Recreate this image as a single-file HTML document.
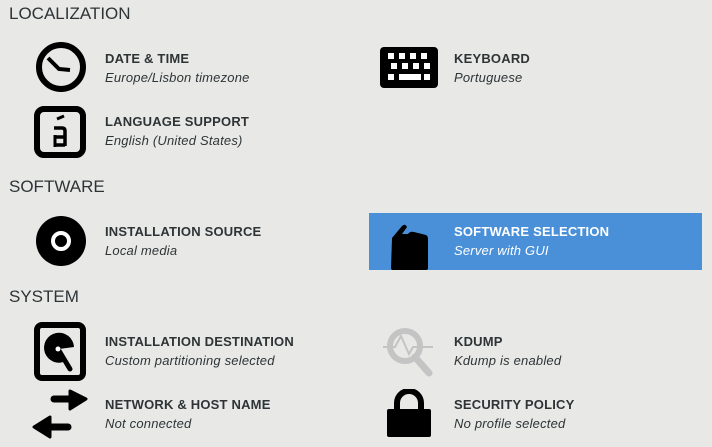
<!DOCTYPE html><html><head><style>
body{margin:0;width:712px;height:447px;background:#e8e8e7;position:relative;overflow:hidden;font-family:"Liberation Sans",sans-serif;color:#2e3436}
.h{position:absolute;left:9px;font-size:17px;line-height:20px}
.t{position:absolute;font-size:13px;font-weight:bold;line-height:16px;white-space:nowrap;letter-spacing:0.2px}
.s{position:absolute;font-size:13px;font-style:italic;line-height:16px;white-space:nowrap;letter-spacing:0.2px}
svg{position:absolute}
.hl{position:absolute;left:369px;top:213px;width:333px;height:57px;background:#4a90d9}
</style></head><body>
<div class="h" style="top:4px">LOCALIZATION</div>
<div class="h" style="top:177px">SOFTWARE</div>
<div class="h" style="top:287px">SYSTEM</div>
<div class="hl"></div>

<svg style="left:30px;top:36px" width="62" height="62"><circle cx="31" cy="31" r="22" fill="none" stroke="#000" stroke-width="6"/><path d="M18 22 L29 33 L40 34" fill="none" stroke="#000" stroke-width="4"/></svg>
<div class="t" style="left:105px;top:51px">DATE &amp; TIME</div>
<div class="s" style="left:105px;top:70px">Europe/Lisbon timezone</div>

<svg style="left:380px;top:47px" width="58" height="41"><rect width="58" height="41" rx="4" fill="#000"/><g fill="#fff"><rect x="8" y="6" width="6" height="6"/><rect x="19" y="6" width="6" height="6"/><rect x="30" y="6" width="6" height="6"/><rect x="41" y="6" width="6" height="6"/><rect x="11" y="16" width="6" height="6"/><rect x="22" y="16" width="6" height="6"/><rect x="33" y="16" width="6" height="6"/><rect x="44" y="16" width="6" height="6"/><rect x="8" y="27" width="6" height="6"/><rect x="19" y="27" width="22" height="6"/><rect x="44" y="27" width="6" height="6"/></g></svg>
<div class="t" style="left:454px;top:51px">KEYBOARD</div>
<div class="s" style="left:454px;top:70px">Portuguese</div>

<svg style="left:34px;top:106px" width="52" height="52"><rect x="3" y="3" width="46" height="46" rx="7" fill="none" stroke="#000" stroke-width="6"/><path d="M23 13 L30 10" stroke="#000" stroke-width="3"/><path d="M20 22 L28 22 Q31 22 31 25 L31 40 M20 31 L31 31 M20 39 L31 39" fill="none" stroke="#000" stroke-width="3.5"/><path d="M21 29 L21 41" stroke="#000" stroke-width="3"/></svg>
<div class="t" style="left:105px;top:114px">LANGUAGE SUPPORT</div>
<div class="s" style="left:105px;top:133px">English (United States)</div>

<svg style="left:34px;top:214px" width="54" height="54"><circle cx="27" cy="27" r="25" fill="#000"/><circle cx="27" cy="27" r="8" fill="none" stroke="#fff" stroke-width="4"/></svg>
<div class="t" style="left:105px;top:224px">INSTALLATION SOURCE</div>
<div class="s" style="left:105px;top:243px">Local media</div>

<svg style="left:388px;top:222px" width="44" height="50"><path d="M4 16 L14 4 Q17 1 19 5 L14 12 L20 12 Q22 9 26 10 L38 13 Q40 14 40 17 L40 46 Q40 48 38 48 L5 48 Q3 48 3 46 Z" fill="#000"/></svg>
<div class="t" style="left:454px;top:224px;color:#fff">SOFTWARE SELECTION</div>
<div class="s" style="left:454px;top:243px;color:#fff">Server with GUI</div>

<svg style="left:34px;top:322px" width="52" height="60"><rect x="3" y="3" width="46" height="53" rx="5" fill="none" stroke="#000" stroke-width="6"/><path d="M40 25 A15 15 0 1 0 32 39 L25 27 Z" fill="#000"/><path d="M24 27 L36 47" stroke="#000" stroke-width="5" stroke-linecap="round"/><circle cx="24" cy="27" r="2.5" fill="#fff"/></svg>
<div class="t" style="left:105px;top:334px">INSTALLATION DESTINATION</div>
<div class="s" style="left:105px;top:353px">Custom partitioning selected</div>

<svg style="left:383px;top:324px" width="54" height="56"><circle cx="22" cy="22" r="15" fill="none" stroke="#c4c4c4" stroke-width="6"/><path d="M32 33 L46 49" stroke="#c4c4c4" stroke-width="7" stroke-linecap="round"/><path d="M0 23 L12 23 L18 12 L26 30 L30 23 L50 23" fill="none" stroke="#c4c4c4" stroke-width="2"/></svg>
<div class="t" style="left:454px;top:334px">KDUMP</div>
<div class="s" style="left:454px;top:353px">Kdump is enabled</div>

<svg style="left:32px;top:389px" width="58" height="52"><path d="M22 10 L46 10" stroke="#000" stroke-width="7" stroke-linecap="round"/><path d="M38 2 L54 10 L38 20 Z" fill="#000" stroke="#000" stroke-width="3" stroke-linejoin="round"/><path d="M12 38 L36 38" stroke="#000" stroke-width="7" stroke-linecap="round"/><path d="M18 28 L2 38 L18 48 Z" fill="#000" stroke="#000" stroke-width="3" stroke-linejoin="round"/></svg>
<div class="t" style="left:105px;top:397px">NETWORK &amp; HOST NAME</div>
<div class="s" style="left:105px;top:416px">Not connected</div>

<svg style="left:386px;top:389px" width="46" height="50"><path d="M11 20 L11 14 A12 12 0 0 1 35 14 L35 20" fill="none" stroke="#000" stroke-width="6"/><rect x="1" y="20" width="44" height="28" rx="2" fill="#000"/></svg>
<div class="t" style="left:454px;top:397px">SECURITY POLICY</div>
<div class="s" style="left:454px;top:416px">No profile selected</div>
</body></html>
